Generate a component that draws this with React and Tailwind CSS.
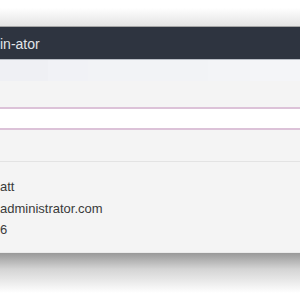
export default function App() {
  return (
    <div className="w-[300px] h-[300px] overflow-hidden bg-white relative" style={{ fontFamily: '"Liberation Sans", Arial, sans-serif' }}>
      <div className="h-[26px] bg-linear-to-b from-white via-white via-30% to-[#e4e4e4]" />
      <div className="h-px bg-[#a6a6a6]" />
      <div className="h-[32px] bg-[#2e3440] flex items-center">
        <span className="text-[14px] text-[#e2e5ea] leading-none mt-[2px]">in-ator</span>
      </div>
      <div className="h-px bg-[#b9bdc5]" />
      <div className="h-[21px] bg-[#f1f2f6] flex">
        <div className="w-[48px] bg-[#eff0f4]" />
        <div className="w-[40px] bg-[#f1f2f6]" />
        <div className="w-[120px] bg-[#f2f3f6]" />
        <div className="w-[42px] bg-[#f3f4f7]" />
        <div className="flex-1 bg-[#f4f5f8]" />
      </div>
      <div className="h-[26px] bg-[#f4f4f4]" />
      <div className="h-[2px] bg-[#dcc2d8]" />
      <div className="h-[19px] bg-white" />
      <div className="h-[2px] bg-[#dcc2d8]" />
      <div className="h-[31px] bg-[#f4f4f4]" />
      <div className="h-px bg-[#e3e3e3]" />
      <div className="h-[90px] bg-[#f4f4f4] pt-[14px] text-[13px] leading-[21.5px] text-[#3a3a3a]">
        <div>att</div>
        <div>administrator.com</div>
        <div>6</div>
      </div>
      <div className="h-px bg-[#ebebeb]" />
      <div className="h-[40px] bg-linear-to-b from-[#999999] via-[#d4d4d4] via-40% to-white" />
    </div>
  );
}
